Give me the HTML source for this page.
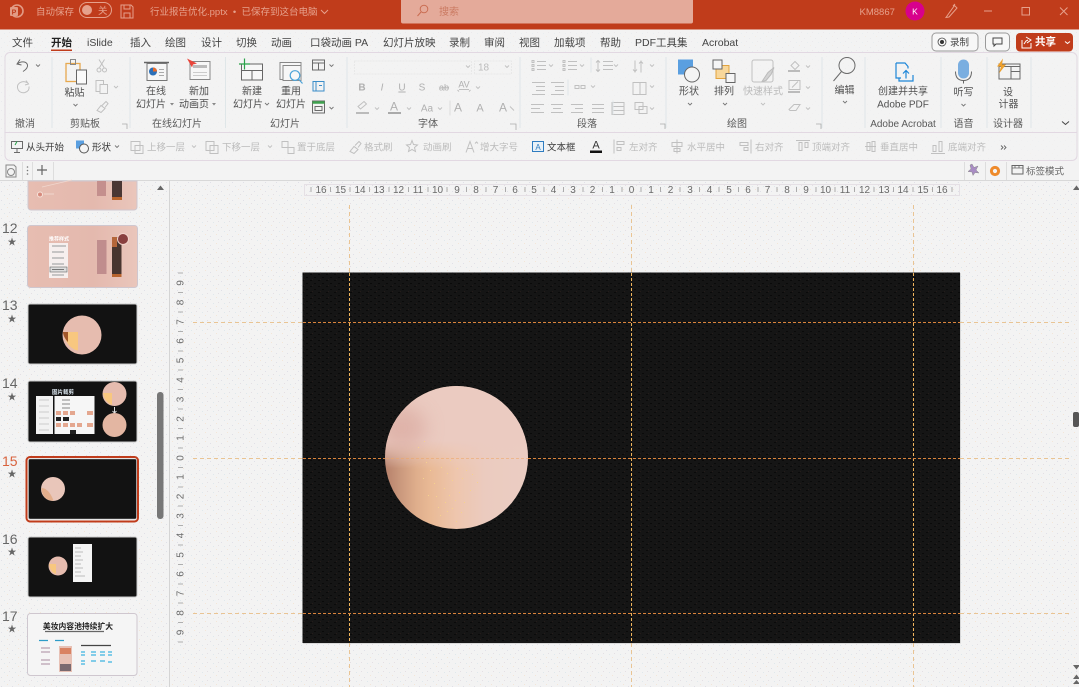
<!DOCTYPE html>
<html lang="zh"><head><meta charset="utf-8"><title>行业报告优化.pptx</title>
<style>
html,body{margin:0;padding:0;background:#f3f3f3;overflow:hidden}
svg{display:block;position:absolute;left:0;top:0;filter:blur(.3px)}
text{font-family:"Liberation Sans","Noto Sans CJK SC",sans-serif;white-space:pre}
.tab{font-size:10.5px;fill:#444}
.lb{font-size:10px;fill:#505050;text-anchor:middle}
.gl{font-size:10px;fill:#5a5a5a;text-anchor:middle}
.q{font-size:9.5px;fill:#3a3a3a}
.qg{font-size:9.5px;fill:#bcbcbc}
.r{font-size:10px;fill:#6a6a6a;text-anchor:middle}
.n{font-size:14px;fill:#666}
.ic{fill:none;stroke:#6a6a6a;stroke-width:1}
.ig{fill:none;stroke:#c0c0c0;stroke-width:1}
.ch{fill:none;stroke:#777;stroke-width:.9}
.chg{fill:none;stroke:#c0c0c0;stroke-width:.9}
.st{font-size:9px;fill:#666;text-anchor:middle}
</style></head><body>
<svg width="1079" height="687" viewBox="0 0 1079 687" xmlns="http://www.w3.org/2000/svg">
<defs>
<pattern id="noise" width="11" height="9" patternUnits="userSpaceOnUse">
<rect x="1" y="2" width="1" height="1" fill="#e0e0e8"/><rect x="7" y="0" width="1" height="1" fill="#f3e6d8"/><rect x="4" y="6" width="1" height="1" fill="#dfe8ec"/><rect x="9" y="5" width="1" height="1" fill="#e4dfe4"/>
</pattern>
<pattern id="dark" width="8" height="6" patternUnits="userSpaceOnUse">
<rect width="8" height="6" fill="#151515"/><rect x="2" y="1" width="2" height="1" fill="#0a0a0a"/><rect x="6" y="4" width="2" height="1" fill="#0a0a0a"/><rect x="0" y="3" width="1" height="1" fill="#241c1a"/>
</pattern>
<linearGradient id="pink" x1="0" y1="0" x2="1" y2="0"><stop offset="0" stop-color="#e7bdb1"/><stop offset=".6" stop-color="#e4b9ae"/><stop offset="1" stop-color="#eac6bb"/></linearGradient>
<linearGradient id="ball" x1="0" y1="0" x2="1" y2="0">
<stop offset="0" stop-color="#b5806a"/><stop offset=".1" stop-color="#c9977c"/><stop offset=".22" stop-color="#dfae8c"/><stop offset=".32" stop-color="#e9ba96"/><stop offset=".5" stop-color="#eec6ae"/><stop offset=".7" stop-color="#ebcbbf"/><stop offset="1" stop-color="#ebcdc3"/>
</linearGradient>
<linearGradient id="ballTop" x1="0" y1="0" x2="0" y2="1">
<stop offset="0" stop-color="#ebcbc1"/><stop offset=".38" stop-color="#ebcbc1"/><stop offset=".58" stop-color="#ebcbc1" stop-opacity="0"/>
</linearGradient>
<filter id="soft" x="-50%" y="-50%" width="200%" height="200%"><feGaussianBlur stdDeviation="9"/></filter>
<clipPath id="clipBall"><circle cx="456.500" cy="457.500" r="71.500"/></clipPath>
</defs>

<!-- base -->
<rect width="1079" height="687" fill="#f3f3f3"/>
<rect y="181" width="1079" height="506" fill="url(#noise)"/>
<rect y="30" width="1079" height="130" fill="url(#noise)" opacity=".5"/>

<!-- title bar -->
<rect width="1079" height="29.500" fill="#c03c1b"/>
<circle cx="17" cy="11" r="6" fill="none" stroke="#e29b85" stroke-width="1.600"/><rect x="10" y="7" width="8" height="9" rx="1" fill="#e29b85"/><text x="14" y="14.500" font-size="7" font-weight="700" fill="#c03c1b" text-anchor="middle">P</text>
<text x="36" y="15" font-size="9.500" fill="#e6a18c">自动保存</text>
<rect x="79.500" y="2.500" width="32" height="15" rx="7.500" fill="none" stroke="#e6a18c"/><circle cx="87" cy="10" r="5" fill="#e6a18c"/><text x="98" y="14" font-size="9.500" fill="#e6a18c">关</text>
<path d="M121 5h10l2 2v11h-12zM124 5v4h6V5M124 18v-5h6v5" fill="none" stroke="#e6a18c"/>
<text x="150" y="15" font-size="9.500" fill="#e6a18c">行业报告优化.pptx  •  已保存到这台电脑</text>
<path d="M321 10l3.500 3.500 3.500-3.500" fill="none" stroke="#e6a18c"/>
<rect x="401" y="-3" width="292" height="26.500" rx="2" fill="#e4aa9a"/>
<circle cx="424" cy="9" r="3.800" fill="none" stroke="#ca6d52"/><path d="M421 12l-3.500 4" stroke="#ca6d52" fill="none"/>
<text x="439" y="15" font-size="10" fill="#cb7b63">搜索</text>
<text x="859.500" y="15" font-size="9.500" fill="#e6a18c">KM8867</text>
<circle cx="915" cy="11" r="9.500" fill="#d8008c"/><text x="915" y="14.500" font-size="8.500" fill="#fff" text-anchor="middle">K</text>
<path d="M947 16l-1 1.500 3-.5 8-9-2.500-2.500zM953 6l2-2" fill="none" stroke="#e6a18c"/>
<path d="M984 11h8" stroke="#e6a18c"/><rect x="1022" y="7.500" width="7.500" height="7.500" fill="none" stroke="#e6a18c"/><path d="M1060 7.500l7.500 7.500M1067.500 7.500l-7.500 7.500" stroke="#e6a18c"/>

<!-- tabs -->
<text class="tab" x="12" y="46">文件</text>
<text class="tab" x="51" y="46" font-weight="700" style="fill:#222">开始</text>
<rect x="51" y="49.500" width="21" height="1.500" fill="#c03c1b"/>
<text class="tab" x="87" y="46">iSlide</text>
<text class="tab" x="130" y="46">插入</text>
<text class="tab" x="165" y="46">绘图</text>
<text class="tab" x="201" y="46">设计</text>
<text class="tab" x="236" y="46">切换</text>
<text class="tab" x="271" y="46">动画</text>
<text class="tab" x="310" y="46">口袋动画 PA</text>
<text class="tab" x="383" y="46">幻灯片放映</text>
<text class="tab" x="449" y="46">录制</text>
<text class="tab" x="484" y="46">审阅</text>
<text class="tab" x="519" y="46">视图</text>
<text class="tab" x="554" y="46">加载项</text>
<text class="tab" x="600" y="46">帮助</text>
<text class="tab" x="635" y="46">PDF工具集</text>
<text class="tab" x="702" y="46">Acrobat</text>

<rect x="932" y="33" width="46" height="18" rx="4" fill="#f7f7f7" stroke="#9a9a9a"/>
<circle cx="942" cy="42" r="4" fill="none" stroke="#444" stroke-width=".8"/><circle cx="942" cy="42" r="2" fill="#333"/>
<text x="950" y="45.500" font-size="9.500" fill="#444">录制</text>
<rect x="985.500" y="33" width="24" height="18" rx="4" fill="#f7f7f7" stroke="#9a9a9a"/>
<path d="M993 38h9v6h-6l-2 2v-2h-1z" fill="none" stroke="#444"/>
<rect x="1016" y="33" width="57" height="18.500" rx="4" fill="#c03c1b"/>
<path d="M1022 40v8h9v-5M1024 44l2-3 2-1M1026 37l5 3-4 3" fill="none" stroke="#fff"/>
<text x="1035" y="45" font-size="10.500" fill="#fff" font-weight="700">共享</text>
<path d="M1065 41.500l2.500 2 2.500-2" fill="none" stroke="#fff"/>

<!-- ribbon container -->
<rect x="5" y="52.500" width="1072" height="108" rx="5" fill="#f3f3f3" fill-opacity=".6" stroke="#e2d8e2"/>
<path d="M5 132.500H1077" stroke="#e2d8e2"/>
<path stroke="#dfe6e8" d="M52 57v71M130 57v71M225.500 57v71M347 57v71M520 57v71M666 57v71M822 57v71M865 57v71M941 57v71M987 57v71M1031 57v71"/>

<g transform="translate(0,-2.500)">
<!-- undo -->
<path d="M20 62l-3 4.500 4.500 1M17.500 66.500c3-3 9-3 10 1 .5 3-2 5-4.500 6.500" class="ic"/>
<path class="ch" d="M36 67l2 2 2-2"/>
<path d="M26 83l2.500 3.500-3.500 1M27 85c-5-2.500-10 1-9.500 5 .5 4 4 6 7.500 5 3-1 4.500-3 4-6" class="ig"/>
<!-- paste -->
<rect x="66" y="66" width="14" height="18" fill="none" stroke="#e7a94f" stroke-width="1.300"/>
<rect x="70.500" y="62" width="5" height="5" fill="none" stroke="#888"/>
<rect x="76.500" y="72.500" width="10" height="14" fill="#fafafa" stroke="#666"/>
<text class="lb" x="74.500" y="98.500">粘贴</text><path class="ch" d="M73.500 106.500l2 2 2-2"/>
<path d="M99 62l5 8M104.500 62l-5 8" class="ig"/><circle cx="99" cy="72.500" r="2" class="ig"/><circle cx="104.500" cy="72.500" r="2" class="ig"/>
<rect x="96" y="83" width="7.500" height="11" class="ig"/><rect x="100" y="87" width="7.500" height="9" fill="#f3f3f3" stroke="#c0c0c0"/><path class="chg" d="M114 88.500l2 2 2-2"/>
<path d="M97 113l4-5 4 3-4 4zM102 108l4-4 2 2-3 4" class="ig"/>
<!-- online slides -->
<path d="M144 65h25" stroke="#666" stroke-width="1.500"/><rect x="147" y="66" width="20" height="17" fill="#f6f6f6" stroke="#777"/>
<circle cx="153" cy="74" r="4" fill="#2c70b8"/><path d="M153 74V70a4 4 0 0 1 4 4z" fill="#e86a2a"/><path d="M159 72h5M159 75h5M159 78h5" stroke="#aaa"/>
<text class="lb" x="156" y="97">在线</text><text class="lb" x="151" y="110">幻灯片</text><path d="M170 105.500h4l-2 2.500z" fill="#888"/>
<rect x="190" y="64" width="20" height="18" fill="#f7f7f7" stroke="#888"/><path d="M193 69h14" stroke="#bbb" stroke-width="3"/><path d="M193 75h14M193 78h14" stroke="#ccc"/>
<path d="M187 61l10 5-4 1-1 3z" fill="#e8453a"/>
<text class="lb" x="199" y="97">新加</text><text class="lb" x="194" y="110">动画页</text><path d="M212 105.500h4l-2 2.500z" fill="#888"/>
<!-- new slide -->
<rect x="241.500" y="66.500" width="21" height="16" fill="#f7f7f7" stroke="#666"/><path d="M241.500 73h21M252 73v9.500" stroke="#666"/><path d="M244.500 61v11M239 66.500h11" stroke="#2aa34a" stroke-width="1.200"/>
<text class="lb" x="252" y="97">新建</text><text class="lb" x="248" y="110">幻灯片</text><path class="ch" d="M265 105.500l2 2 2-2"/>
<rect x="280" y="65" width="21" height="17" fill="#f7f7f7" stroke="#888"/><rect x="283" y="68" width="18" height="15" fill="#f7f7f7" stroke="#888"/><circle cx="295" cy="78" r="4.800" fill="none" stroke="#4ba3d8" stroke-width="1.200"/><path d="M298.500 81.500l4 4.500" stroke="#4ba3d8" stroke-width="1.200"/>
<text class="lb" x="291" y="97">重用</text><text class="lb" x="291" y="110">幻灯片</text>
<rect x="312.500" y="62.500" width="12" height="10" class="ic"/><path d="M312.500 65.500h12M318.500 65.500v7" class="ic"/><path class="ch" d="M329.500 67l2 2 2-2"/>
<rect x="313" y="84" width="11" height="9.500" fill="none" stroke="#3b8ec9"/><path d="M316 84v9M319 88h3" stroke="#3b8ec9"/>
<rect x="312.500" y="103.500" width="12" height="12" class="ic"/><path d="M312.500 105h12" stroke="#3fa24f" stroke-width="2.500"/><path d="M315 109h7v4h-7z" class="ic"/><path class="ch" d="M329.500 109.500l2 2 2-2"/>

<!-- font -->
<rect x="354.500" y="63.500" width="117" height="13" fill="none" stroke="#e8e8e8" stroke-dasharray="2 1"/><path class="chg" d="M466 68l2 2 2-2"/>
<text x="478" y="73" font-size="10" fill="#bbb">18</text><rect x="474.500" y="63.500" width="37" height="13" fill="none" stroke="#e8e8e8" stroke-dasharray="2 1"/><path class="chg" d="M505 68l2 2 2-2"/>
<g font-size="10" fill="#b0b0b0" text-anchor="middle">
<text x="362" y="93" font-weight="700">B</text><text x="382" y="93" font-style="italic">I</text><text x="402" y="93" text-decoration="underline">U</text><text x="422" y="93">S</text><text x="444" y="93" text-decoration="line-through" font-size="9">ab</text><text x="464" y="90" font-size="9">AV</text>
<text x="394" y="113" font-size="12">A</text><text x="427" y="114">Aa</text><text x="458" y="114" font-size="12">A</text><text x="480" y="114" font-size="11">A</text><text x="503" y="114" font-size="12">A</text>
</g>
<path d="M459 92h10M459 94l-1.500-1.500M469 94l1.500-1.500" class="ig"/>
<path d="M358 109l6-5 2.500 2.500-6 5z" class="ig"/><rect x="356" y="114.500" width="13" height="2" fill="#bbb"/>
<rect x="388" y="114.500" width="13" height="2" fill="#aaa"/>
<path class="chg" d="M375 110l2 2 2-2M407 110l2 2 2-2M438 110l2 2 2-2M476 89l2 2 2-2"/>
<path d="M450 103v15" stroke="#ddd"/><path d="M510 109l4 4" class="ig"/>

<!-- paragraph -->
<g class="ig" transform="translate(0,1)">
<path d="M532 62h2v2h-2zM532 66h2v2h-2zM532 70h2v2h-2zM537 63h9M537 67h9M537 71h9"/>
<path d="M563 62h2v2h-2zM563 66h2v2h-2zM563 70h2v2h-2zM568 63h9M568 67h9M568 71h9"/>
<path d="M598 62v11M596 64l2-2 2 2M596 71l2 2 2-2M603 63h10M603 67h10M603 71h10"/>
<path d="M635 62v12M633 71l2 2 2-2M641 62v12M639 65l2-2 2 2"/>
<path d="M532 84h13M536 88h9M536 92h9M532 96h13"/><path d="M551 84h13M555 88h9M555 92h9M551 96h13"/>
<path d="M575 87h4v3h-4zM581 87h4v3h-4z"/><path d="M633 84h13v12h-13zM640 84v12"/>
<path d="M531 106h13M531 110h9M531 114h13"/><path d="M551 106h12M553 110h8M551 114h12"/><path d="M571 106h12M575 110h8M571 114h12"/><path d="M592 106h12M592 110h12M592 114h12"/><path d="M612 104h12v12h-12zM612 108h12M612 112h12"/><path d="M635 104h8v7h-8zM639 108h8v7h-8z"/>
</g>
<path class="chg" d="M549 67l2 2 2-2M580 67l2 2 2-2M614 67l2 2 2-2M650 67l2 2 2-2M591 88l2 2 2-2M650 88l2 2 2-2M650 110l2 2 2-2"/>
<path d="M591 60v15M568 82v16M613 103v14" stroke="#dfe6e8"/>

<!-- drawing -->
<rect x="678" y="62" width="15" height="15" fill="#5a9fe0"/><circle cx="692" cy="77" r="7.500" fill="#f4f4f4" stroke="#666"/>
<text class="lb" x="689" y="97">形状</text><path class="ch" d="M688 105.500l2 2 2-2"/>
<rect x="716" y="68" width="13" height="13" fill="#f8d79a" stroke="#e2a33f"/><rect x="713" y="62.500" width="9" height="9" fill="#f5f5f5" stroke="#666"/><rect x="726" y="76" width="9" height="9" fill="#f5f5f5" stroke="#666"/>
<text class="lb" x="724" y="97">排列</text><path class="ch" d="M723 105.500l2 2 2-2"/>
<rect x="752" y="62.500" width="21" height="22" rx="2" class="ig"/><path d="M762 84l6-9 6-5-3 7-5 6z" fill="#d3d3d3" stroke="#bbb"/>
<text class="lb" x="763" y="97" style="fill:#bbb">快速样式</text><path class="chg" d="M761 105.500l2 2 2-2"/>
<path d="M791 68l4-4 4 4-4 4z" class="ig"/><rect x="788" y="72.500" width="12" height="2" fill="#bbb"/><path class="chg" d="M806 68l2 2 2-2"/>
<rect x="789" y="83" width="11" height="9" class="ig"/><path d="M792 90l6-6" class="ig"/><rect x="788" y="93.500" width="12" height="2" fill="#bbb"/><path class="chg" d="M806 89l2 2 2-2"/>
<path d="M789 112l5-5h6l-4 6h-6z" class="ig"/><path class="chg" d="M806 110l2 2 2-2"/>

<!-- edit -->
<circle cx="847" cy="68" r="8" class="ic"/><path d="M841.500 74l-8 9.500" class="ic"/>
<text class="lb" x="844.500" y="96">编辑</text><path class="ch" d="M843 103.500l2 2 2-2"/>
<!-- acrobat -->
<path d="M896 65.500h9l3 3.500v2M896 65.500v15h5" fill="none" stroke="#1d86d8" stroke-width="1.200"/><path d="M899 80v3.500h14v-6M906 81v-8M903 76l3-3 3 3" fill="none" stroke="#1d86d8" stroke-width="1.200"/>
<text class="lb" x="903" y="97">创建并共享</text><text class="lb" x="903" y="110">Adobe PDF</text>
<!-- mic -->
<rect x="958" y="62" width="11" height="19" rx="5.500" fill="#7aaee0"/><path d="M955.500 74c0 6 3 9 8 9s8-3 8-9M963.500 83v3" fill="none" stroke="#666"/>
<text class="lb" x="963.500" y="98">听写</text><path class="ch" d="M961.500 106.500l2 2 2-2"/>
<!-- designer -->
<rect x="999" y="66.500" width="21" height="15" class="ic"/><path d="M999 69h21M1011 69v12.500M1011 74h9" class="ic"/><path d="M1003 61l-6 8h4l-2 7 7-9h-4z" fill="#eda02d"/>
<text class="lb" x="1008" y="98">设</text><text class="lb" x="1008.500" y="110">计器</text>
</g>

<path d="M122 124h5v5M510 124h6v6M660 124h5v5M816 124h5v5" fill="none" stroke="#aaa" stroke-width=".8"/>
<text class="gl" x="25" y="127">撤消</text><text class="gl" x="85" y="127">剪贴板</text><text class="gl" x="177" y="127">在线幻灯片</text><text class="gl" x="285" y="127">幻灯片</text>
<text class="gl" x="428" y="127">字体</text><text class="gl" x="587" y="127">段落</text><text class="gl" x="737" y="127">绘图</text><text class="gl" x="903" y="127">Adobe Acrobat</text><text class="gl" x="963.500" y="127">语音</text><text class="gl" x="1008" y="127">设计器</text>
<path d="M1062 121.500l3.500 3 3.500-3" fill="none" stroke="#444"/>

<!-- quick toolbar -->
<g transform="translate(0,-4.500)">
<path d="M11.500 146h11v7h-11zM17 153v4M14 157h6" class="ic"/><path d="M17 146l-2 3.500" stroke="#2aa34a"/>
<text class="q" x="26" y="155">从头开始</text>
<rect x="76" y="145" width="8" height="8" fill="#5a9fe0"/><circle cx="84" cy="153" r="4.500" fill="#f4f4f4" stroke="#555"/>
<text class="q" x="92" y="155">形状</text><path class="ch" d="M115 150l2 2 2-2"/>
<g class="ig">
<rect x="131" y="146" width="9" height="9"/><rect x="135" y="150" width="8" height="8"/>
<rect x="206" y="146" width="8" height="9"/><rect x="210" y="150" width="8" height="8"/>
<rect x="282" y="146" width="6" height="6"/><rect x="288" y="152" width="6" height="6"/>
<path d="M350 156l4-5 4 3-4 4zM355 150l4-4 2 2-3 4"/>
<path d="M412 145l1.500 4 4 .5-3 2.500 1 4-3.500-2-3.500 2 1-4-3-2.500 4-.5z"/>
<path d="M466 157l4-11 4 11M467.500 153h5M475 148l1.500-1.500 1.500 1.500"/>
<path d="M614 144v14M617 146h7v3h-7zM617 152h4v3h-4z"/>
<path d="M677 144v14M672 147h10v4h-10zM674 153h6v3h-6z"/>
<path d="M751 144v14M740 147h8v3h-8zM744 152h4v3h-4z"/>
<path d="M796 145h14M799 147v8h3v-8zM805 147v5h3v-5z"/>
<path d="M865 151h11M867 147h3v8h-3zM872 146h3v10h-3z"/>
<path d="M931 158h14M933 150h3v6h-3zM939 146h3v10h-3z"/>
</g>
<text class="qg" x="147" y="155">上移一层</text><path class="chg" d="M192 150l2 2 2-2"/>
<text class="qg" x="222" y="155">下移一层</text><path class="chg" d="M268 150l2 2 2-2"/>
<text class="qg" x="297" y="155">置于底层</text>
<text class="qg" x="364" y="155">格式刷</text>
<text class="qg" x="423" y="155">动画刷</text>
<text class="qg" x="480" y="155">增大字号</text>
<rect x="532.500" y="146" width="11" height="10" fill="#e8f1f8" stroke="#2e7cc0"/><text x="538" y="154.500" font-size="8" fill="#2e7cc0" text-anchor="middle">A</text>
<text class="q" x="547" y="155">文本框</text>
<text x="596" y="153" font-size="11" fill="#333" text-anchor="middle">A</text><rect x="590" y="155" width="12" height="2.500" fill="#111"/>
<text class="qg" x="629" y="155">左对齐</text>
<text class="qg" x="687" y="155">水平居中</text>
<text class="qg" x="755" y="155">右对齐</text>
<text class="qg" x="812" y="155">顶端对齐</text>
<text class="qg" x="880" y="155">垂直居中</text>
<text class="qg" x="948" y="155">底端对齐</text>
<path d="M1001 150l2 2-2 2M1004 150l2 2-2 2" fill="none" stroke="#666" stroke-width=".9"/>
</g>

<!-- tab strip -->
<path d="M0 180.500H1079" stroke="#d8d8d8"/>
<path d="M6 165h8l2 2v10H6z" fill="none" stroke="#888"/><circle cx="11" cy="172" r="3.500" fill="none" stroke="#888"/>
<path d="M22.500 162v18M32.500 162v18M53.500 162v18M964.500 162v18M985.500 162v18M1006.500 162v18" stroke="#ddd"/>
<circle cx="27.500" cy="167" r=".8" fill="#777"/><circle cx="27.500" cy="170.500" r=".8" fill="#777"/><circle cx="27.500" cy="174" r=".8" fill="#777"/>
<path d="M42 165v10M37 170h10" stroke="#666" stroke-width="1.200"/>
<path d="M972 164l2 3.500 4-1.500-2 4 3 3-4-.5-2 3-1-3.500-4-.5 3-2.500-1-4z" fill="#a98cc4" stroke="#8a8a8a" stroke-width=".5"/>
<circle cx="995" cy="171" r="3.600" fill="none" stroke="#ee8a2b" stroke-width="3"/>
<rect x="1012" y="165.500" width="11" height="8.500" fill="none" stroke="#666"/><path d="M1012 168h11M1015 166v2M1019 166v2" stroke="#666" stroke-width=".8"/>
<text x="1026" y="174.500" font-size="9.500" fill="#666">标签模式</text>

<!-- sidebar -->
<path d="M169.500 181V687" stroke="#d4d4d4"/>
<path d="M157 190l3.500-4.500 3.500 4.500z" fill="#666"/>
<rect x="157" y="392" width="6.500" height="127" rx="3" fill="#777"/>

<!-- thumb 11 -->
<path d="M28 181h109v26a3 3 0 0 1-3 3H31a3 3 0 0 1-3-3z" fill="url(#pink)" stroke="#cfc7cf"/>
<rect x="97" y="181" width="9" height="15" fill="#c48f8d"/><rect x="112" y="181" width="10" height="19" fill="#4a3734"/><rect x="112" y="197" width="10" height="3" fill="#b8642e"/>
<circle cx="40" cy="194.500" r="2.500" fill="#d68a7c" stroke="#f6e2da"/><path d="M44 194h10" stroke="#f0d7ce"/><path d="M42 187l30-7" stroke="#f0d7ce" stroke-width=".7"/>
<!-- thumb 12 -->
<text class="n" x="2" y="233">12</text><text class="st" x="12" y="245">★</text>
<rect x="27.500" y="225.500" width="110" height="62" rx="3" fill="url(#pink)" stroke="#cfc7cf"/>
<text x="49" y="240.500" font-size="5" font-weight="700" fill="#fff">推荐样式</text>
<rect x="49" y="243" width="19" height="35" fill="#f6efee"/>
<path d="M52 246h14M52 252h12M52 258h12M52 264h12M52 275h12" stroke="#aaa" stroke-width="1.200"/><rect x="50" y="267" width="17" height="5" fill="#ddd" stroke="#666" stroke-width=".6"/><path d="M52 269.500h12" stroke="#777"/>
<rect x="97" y="240" width="9.500" height="34" fill="#c08d8d"/><rect x="112" y="237" width="9.500" height="40" fill="#48352f"/><rect x="112" y="237" width="5" height="10" fill="#b4663a"/><rect x="112" y="274" width="9.500" height="3" fill="#b8642e"/>
<circle cx="123" cy="239" r="5.500" fill="#89403f" stroke="#f2d4cc"/>
<!-- thumb 13 -->
<text class="n" x="2" y="310">13</text><text class="st" x="12" y="322">★</text>
<rect x="28" y="304" width="109" height="60" rx="2" fill="#121212" stroke="#ccc"/>
<circle cx="82" cy="335" r="19.500" fill="#e6bcaf"/>
<path d="M63 332h15v18.500c-7-1-13-8-15-18.500z" fill="#f8c77f"/><path d="M63 332h5v10c-3-3-5-7-5-10z" fill="#a0562a"/>
<!-- thumb 14 -->
<text class="n" x="2" y="388">14</text><text class="st" x="12" y="400">★</text>
<rect x="28" y="381" width="109" height="61" rx="2" fill="#121212" stroke="#ccc"/>
<text x="52" y="394" font-size="5.500" font-weight="700" fill="#dfeaf3">图片裁剪</text>
<rect x="36" y="396" width="17" height="38" fill="#f2f2f2"/><path d="M39 400h10M39 406h10M39 412h10M39 418h10M39 424h10M39 430h10" stroke="#ccc"/>
<rect x="54.500" y="396" width="40" height="38" fill="#f6f6f6"/>
<path d="M62 400h8M62 404h8M62 408h8" stroke="#888"/>
<g fill="#e4a78f"><rect x="56" y="411" width="5" height="4"/><rect x="63" y="411" width="5" height="4"/><rect x="70" y="411" width="5" height="4"/><rect x="56" y="423" width="5" height="4"/><rect x="63" y="423" width="5" height="4"/><rect x="70" y="423" width="5" height="4"/><rect x="77" y="423" width="5" height="4"/><rect x="87" y="411" width="6" height="4"/><rect x="87" y="423" width="6" height="4"/></g>
<g fill="#222"><rect x="56" y="417" width="5" height="4"/><rect x="63" y="417" width="6" height="4"/><rect x="70" y="430" width="6" height="4"/></g>
<circle cx="114.500" cy="394" r="12" fill="#e6bcaf"/><path d="M103 393h9v12c-5-2-8-6-9-12z" fill="#f8c77f"/>
<path d="M114.500 407v6M112.500 411l2 2 2-2" stroke="#ddd" fill="none"/>
<circle cx="114.500" cy="425" r="12" fill="#e3b6a2"/>
<!-- thumb 15 -->
<text x="2" y="466" font-size="14" fill="#d9623d">15</text><text class="st" x="12" y="477">★</text>
<rect x="26.500" y="457" width="111.500" height="64.500" rx="3.500" fill="#f3f3f3" stroke="#c03c1b" stroke-width="2"/>
<rect x="28.500" y="459" width="108" height="60" rx="1.500" fill="#121212" stroke="#bbb" stroke-width=".6"/>
<circle cx="53" cy="489" r="12" fill="#e9c6ba"/><path d="M41.500 488c3 0 8 2 12 12.500-7 1-12-5-12-12.500z" fill="#e3ae8b"/>
<!-- thumb 16 -->
<text class="n" x="2" y="544">16</text><text class="st" x="12" y="555">★</text>
<rect x="28" y="537" width="109" height="60" rx="2" fill="#121212" stroke="#ccc"/>
<circle cx="58" cy="566" r="9.500" fill="#e6bcaf"/><path d="M49 564h7v10c-4-1-6-5-7-10z" fill="#f8c77f"/>
<rect x="73" y="544" width="19" height="38" fill="#f4f4f4"/><path d="M75 548h6M75 552h8M75 556h6M75 560h8M75 564h6M75 568h8M75 572h6M75 576h10" stroke="#bbb"/>
<!-- thumb 17 -->
<text class="n" x="2" y="621">17</text><text class="st" x="12" y="632">★</text>
<rect x="27.500" y="613.500" width="109.500" height="62" rx="3" fill="#f5f5f5" stroke="#cfc7cf"/>
<text x="78" y="629" font-size="7.800" font-weight="700" fill="#222" text-anchor="middle">美妆内容池持续扩大</text>
<path d="M45 631.500h59" stroke="#666" stroke-width="1.300"/>
<path d="M39 640.500h9M55 640.500h9" stroke="#2d9cc8" stroke-width="1.200"/>
<rect x="59" y="646" width="13" height="26" fill="#e7c1b5"/><rect x="60" y="648" width="11" height="6" fill="#d98262"/><rect x="60" y="664" width="11" height="7" fill="#7a6a70"/>
<path d="M41 648h9M41 652h9M41 660h9M41 664h9" stroke="#b9a0b0" stroke-width="1.300"/>
<path d="M81 645.500h30" stroke="#444" stroke-width="1.200"/>
<path d="M81 652h4M81 655h4M91 652h5M91 655h5M100 652h5M100 655h5M108 652h4M108 655h4M81 661h4M81 664h4M91 661h5M100 661h5M108 662h4" stroke="#3db5e0" stroke-width="1.300"/>

<!-- horizontal ruler -->
<rect x="304.500" y="184.500" width="655" height="11" fill="none" stroke="#e5e0e5"/>
<text class="r" x="321" y="193">16</text><text class="r" x="340.500" y="193">15</text><text class="r" x="360" y="193">14</text><text class="r" x="379" y="193">13</text><text class="r" x="398.500" y="193">12</text><text class="r" x="418" y="193">11</text><text class="r" x="437.500" y="193">10</text><text class="r" x="457" y="193">9</text><text class="r" x="476" y="193">8</text><text class="r" x="495.500" y="193">7</text><text class="r" x="515" y="193">6</text><text class="r" x="534" y="193">5</text><text class="r" x="553.500" y="193">4</text><text class="r" x="573" y="193">3</text><text class="r" x="592.500" y="193">2</text><text class="r" x="612" y="193">1</text><text class="r" x="631.500" y="193">0</text><text class="r" x="651" y="193">1</text><text class="r" x="670.500" y="193">2</text><text class="r" x="690" y="193">3</text><text class="r" x="709.500" y="193">4</text><text class="r" x="729" y="193">5</text><text class="r" x="748" y="193">6</text><text class="r" x="767.500" y="193">7</text><text class="r" x="787" y="193">8</text><text class="r" x="806" y="193">9</text><text class="r" x="825.500" y="193">10</text><text class="r" x="845" y="193">11</text><text class="r" x="864.500" y="193">12</text><text class="r" x="884" y="193">13</text><text class="r" x="903" y="193">14</text><text class="r" x="923" y="193">15</text><text class="r" x="942" y="193">16</text>
<path d="M311 187v5M330.500 187v5M350 187v5M369.500 187v5M389 187v5M408.500 187v5M428 187v5M447 187v5M466.500 187v5M486 187v5M505.500 187v5M525 187v5M544 187v5M563.500 187v5M583 187v5M602.500 187v5M622 187v5M641 187v5M660.500 187v5M680 187v5M699.500 187v5M719 187v5M738.500 187v5M758 187v5M777 187v5M796.500 187v5M816 187v5M835 187v5M854.500 187v5M874 187v5M893.500 187v5M913 187v5M932.500 187v5M952 187v5" stroke="#999" stroke-width=".8"/>

<!-- vertical ruler -->
<text class="r" transform="translate(183.500 283) rotate(-90)">9</text><text class="r" transform="translate(183.500 302.500) rotate(-90)">8</text><text class="r" transform="translate(183.500 322) rotate(-90)">7</text><text class="r" transform="translate(183.500 341) rotate(-90)">6</text><text class="r" transform="translate(183.500 360.500) rotate(-90)">5</text><text class="r" transform="translate(183.500 380) rotate(-90)">4</text><text class="r" transform="translate(183.500 399.500) rotate(-90)">3</text><text class="r" transform="translate(183.500 419) rotate(-90)">2</text><text class="r" transform="translate(183.500 438) rotate(-90)">1</text><text class="r" transform="translate(183.500 458) rotate(-90)">0</text><text class="r" transform="translate(183.500 477) rotate(-90)">1</text><text class="r" transform="translate(183.500 496.500) rotate(-90)">2</text><text class="r" transform="translate(183.500 516) rotate(-90)">3</text><text class="r" transform="translate(183.500 535.500) rotate(-90)">4</text><text class="r" transform="translate(183.500 555) rotate(-90)">5</text><text class="r" transform="translate(183.500 574) rotate(-90)">6</text><text class="r" transform="translate(183.500 593.500) rotate(-90)">7</text><text class="r" transform="translate(183.500 613) rotate(-90)">8</text><text class="r" transform="translate(183.500 632.500) rotate(-90)">9</text>
<path d="M178 273h5M178 292.500h5M178 312h5M178 331.500h5M178 351h5M178 370h5M178 389.500h5M178 409h5M178 428.500h5M178 448h5M178 467.500h5M178 487h5M178 506h5M178 525.500h5M178 545h5M178 564.500h5M178 584h5M178 603h5M178 622.500h5M178 642h5" stroke="#999" stroke-width=".8"/>

<!-- slide -->
<rect x="303" y="273" width="657.500" height="370.500" fill="#bdbdbd"/>
<rect x="302.500" y="272.500" width="657.500" height="370.500" fill="url(#dark)"/>
<circle cx="456.500" cy="457.500" r="71.500" fill="url(#ball)"/>
<g clip-path="url(#clipBall)">
<rect x="385" y="386" width="143" height="143" fill="url(#ballTop)"/>
<ellipse cx="402" cy="428" rx="24" ry="22" fill="#dcaea4" opacity=".8" filter="url(#soft)"/>
<g fill="#f6d28e">
<rect x="418" y="447" width="1" height="1"/><rect x="424" y="441" width="1" height="1"/><rect x="441" y="467" width="1" height="1"/><rect x="447" y="473" width="1" height="1"/><rect x="452" y="480" width="1" height="1"/><rect x="444" y="488" width="1" height="1"/><rect x="449" y="495" width="1" height="1"/><rect x="455" y="500" width="1" height="1"/><rect x="459" y="492" width="1" height="1"/><rect x="462" y="478" width="1" height="1"/><rect x="466" y="470" width="1" height="1"/><rect x="438" y="507" width="1" height="1"/><rect x="428" y="495" width="1" height="1"/><rect x="434" y="483" width="1" height="1"/><rect x="430" y="470" width="1" height="1"/><rect x="440" y="515" width="1" height="1"/><rect x="447" y="511" width="1" height="1"/><rect x="456" y="521" width="1" height="1"/><rect x="470" y="490" width="1" height="1"/><rect x="477" y="482" width="1" height="1"/><rect x="450" y="460" width="1" height="1"/><rect x="457" y="468" width="1" height="1"/><rect x="445" y="502" width="1" height="1"/><rect x="452" y="508" width="1" height="1"/><rect x="461" y="512" width="1" height="1"/><rect x="436" y="496" width="1" height="1"/><rect x="423" y="478" width="1" height="1"/><rect x="426" y="462" width="1" height="1"/><rect x="464" y="502" width="1" height="1"/><rect x="472" y="474" width="1" height="1"/>
</g>
</g>

<!-- guides -->
<g stroke="#e9c08a" stroke-width="1" stroke-dasharray="4 3" opacity=".9">
<path d="M349.500 205V272M631.500 205V272M913.500 205V272M349.500 643V687M631.500 643V687M913.500 643V687"/>
<path d="M193 322.500H302M960 322.500H1069M193 458.500H302M960 458.500H1069M193 613.500H302M960 613.500H1069"/>
</g>
<g stroke-dasharray="3 2" stroke-width="1">
<path d="M349.500 273V643M631.500 273V643M913.500 273V643" stroke="#efb45c"/>
<path d="M303 322.500H960M303 458.500H385M528 458.500H960M303 613.500H960" stroke="#d9843c"/>
<path d="M386 458.500H528" stroke="#efa766" opacity=".55"/>
</g>

<!-- right scrollbar -->
<path d="M1073 190l3.500-4.500 3.500 4.500z" fill="#666"/>
<rect x="1073" y="412" width="6" height="15" rx="2" fill="#555"/>
<path d="M1073 665l3.500 4.500 3.500-4.500z" fill="#666"/>
<path d="M1073 679l3.500-4.500 3.500 4.500zM1073 684l3.500-4 3.500 4z" fill="#666"/>
</svg>
</body></html>
